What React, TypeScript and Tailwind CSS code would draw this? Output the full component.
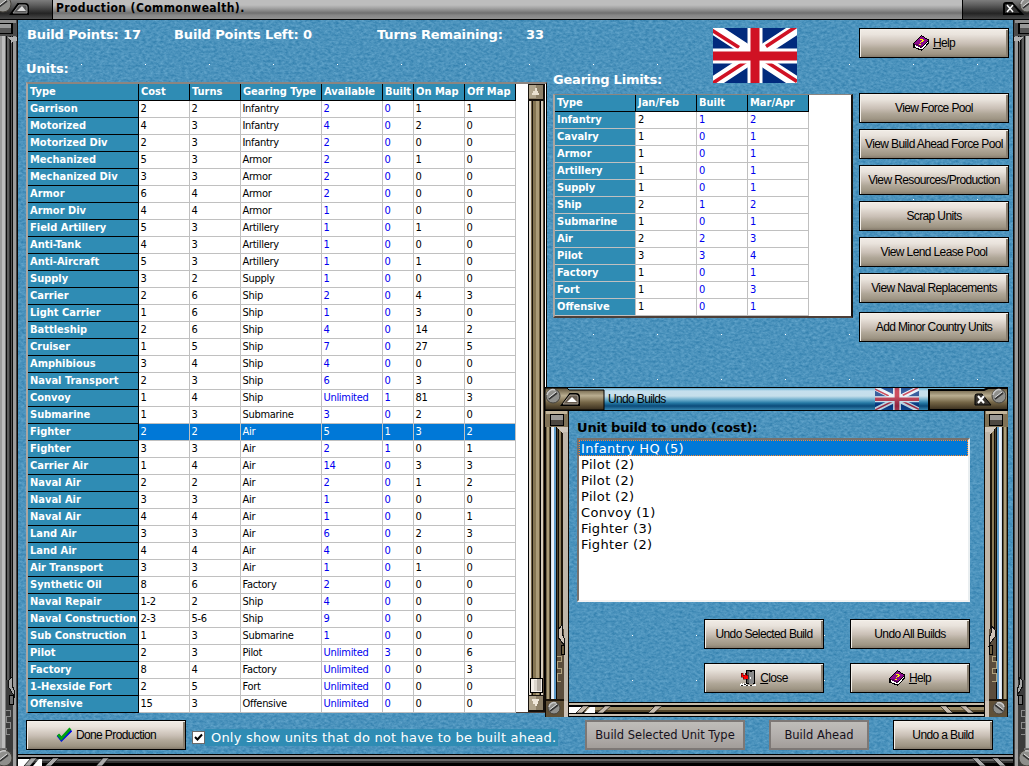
import type { ReactNode } from "react";
import clsx from "clsx";

type Cell = string | number;

const UNIT_HEADERS = ["Type", "Cost", "Turns", "Gearing Type", "Available", "Built", "On Map", "Off Map"];

const UNITS: Cell[][] = [
  ["Garrison", 2, 2, "Infantry", 2, 0, 1, 1],
  ["Motorized", 4, 3, "Infantry", 4, 0, 2, 0],
  ["Motorized Div", 2, 3, "Infantry", 2, 0, 0, 0],
  ["Mechanized", 5, 3, "Armor", 2, 0, 1, 0],
  ["Mechanized Div", 3, 3, "Armor", 2, 0, 0, 0],
  ["Armor", 6, 4, "Armor", 2, 0, 0, 0],
  ["Armor Div", 4, 4, "Armor", 1, 0, 0, 0],
  ["Field Artillery", 5, 3, "Artillery", 1, 0, 1, 0],
  ["Anti-Tank", 4, 3, "Artillery", 1, 0, 0, 0],
  ["Anti-Aircraft", 5, 3, "Artillery", 1, 0, 1, 0],
  ["Supply", 3, 2, "Supply", 1, 0, 0, 0],
  ["Carrier", 2, 6, "Ship", 2, 0, 4, 3],
  ["Light Carrier", 1, 6, "Ship", 1, 0, 3, 0],
  ["Battleship", 2, 6, "Ship", 4, 0, 14, 2],
  ["Cruiser", 1, 5, "Ship", 7, 0, 27, 5],
  ["Amphibious", 3, 4, "Ship", 4, 0, 0, 0],
  ["Naval Transport", 2, 3, "Ship", 6, 0, 3, 0],
  ["Convoy", 1, 4, "Ship", "Unlimited", 1, 81, 3],
  ["Submarine", 1, 3, "Submarine", 3, 0, 2, 0],
  ["Fighter", 2, 2, "Air", 5, 1, 3, 2],
  ["Fighter", 3, 3, "Air", 2, 1, 0, 1],
  ["Carrier Air", 1, 4, "Air", 14, 0, 3, 3],
  ["Naval Air", 2, 2, "Air", 2, 0, 1, 2],
  ["Naval Air", 3, 3, "Air", 1, 0, 0, 0],
  ["Naval Air", 4, 4, "Air", 1, 0, 0, 1],
  ["Land Air", 3, 3, "Air", 6, 0, 2, 3],
  ["Land Air", 4, 4, "Air", 4, 0, 0, 0],
  ["Air Transport", 3, 3, "Air", 1, 0, 1, 0],
  ["Synthetic Oil", 8, 6, "Factory", 2, 0, 0, 0],
  ["Naval Repair", "1-2", 2, "Ship", 4, 0, 0, 0],
  ["Naval Construction", "2-3", "5-6", "Ship", 9, 0, 0, 0],
  ["Sub Construction", 1, 3, "Submarine", 1, 0, 0, 0],
  ["Pilot", 2, 3, "Pilot", "Unlimited", 3, 0, 6],
  ["Factory", 8, 4, "Factory", "Unlimited", 0, 0, 3],
  ["1-Hexside Fort", 2, 5, "Fort", "Unlimited", 0, 0, 0],
  ["Offensive", 15, 3, "Offensive", "Unlimited", 0, 0, 0],
];

const GEARING_HEADERS = ["Type", "Jan/Feb", "Built", "Mar/Apr"];

const GEARING: Cell[][] = [
  ["Infantry", 2, 1, 2],
  ["Cavalry", 1, 0, 1],
  ["Armor", 1, 0, 1],
  ["Artillery", 1, 0, 1],
  ["Supply", 1, 0, 1],
  ["Ship", 2, 1, 2],
  ["Submarine", 1, 0, 1],
  ["Air", 2, 2, 3],
  ["Pilot", 3, 3, 4],
  ["Factory", 1, 0, 1],
  ["Fort", 1, 0, 3],
  ["Offensive", 1, 0, 1],
];

const UNDO_ITEMS = ["Infantry HQ (5)", "Pilot (2)", "Pilot (2)", "Pilot (2)", "Convoy (1)", "Fighter (3)", "Fighter (2)"];

const SELECTED_UNIT = 19;

/* Speckled blue backdrop with a faint grid of white dots */
function Texture({ id, dotX, dotY }: { id: string; dotX: number; dotY: number }) {
  return (
    <svg className="absolute inset-0 -z-10 h-full w-full" aria-hidden="true">
      <defs>
        <filter id={`${id}-noise`} x="0" y="0" width="100%" height="100%" colorInterpolationFilters="sRGB">
          <feTurbulence type="fractalNoise" baseFrequency="0.28 0.42" numOctaves="3" seed="7" stitchTiles="stitch" />
          <feColorMatrix values="0.26 0 0 0 0.165  0.2 0 0 0 0.475  0.16 0 0 0 0.66  0 0 0 0 1" />
        </filter>
        <pattern id={`${id}-dots`} x={dotX} y={dotY} width="64" height="45" patternUnits="userSpaceOnUse">
          <rect width="1" height="1" fill="#fff" />
        </pattern>
      </defs>
      <rect width="100%" height="100%" filter={`url(#${id}-noise)`} />
      <rect width="100%" height="100%" fill={`url(#${id}-dots)`} />
    </svg>
  );
}

function UnionJack({ className }: { className?: string }) {
  return (
    <svg viewBox="0 0 84 55" preserveAspectRatio="none" className={className}>
      <rect width="84" height="55" fill="#012a7d" />
      <path d="M0 0L84 55M84 0L0 55" stroke="#fff" strokeWidth="12" />
      <path d="M-2 1.5L26 19.5M84 -2L53 18.5M0 55L33 33.5M84 53.5L53 33.5" stroke="#d01224" strokeWidth="3.6" />
      <path d="M42 0V55M0 28H84" stroke="#fff" strokeWidth="15" />
      <path d="M0 28H84M42 0V55" stroke="#d01224" strokeWidth="9" />
    </svg>
  );
}

function BookIcon() {
  return (
    <svg viewBox="0 0 16 16" className="h-4 w-4" shapeRendering="crispEdges">
      <path d="M0 9L8 0L16 4.5V8L9 16L0 12.5Z" fill="#000" />
      <path d="M1.5 10L8.6 13L14.8 6.5V8L8.8 14.6L1.5 11.8Z" fill="#fff" />
      <path d="M1.5 8.5L8.3 1.2L15 5L8.6 11.8Z" fill="#8c0b8c" />
      <path d="M1.5 8.5L3 8.5L9 11.5V13L1.5 10Z" fill="#5a005a" />
      <path d="M7 4H10V5H11V6H10V7H8V8H7V7H8V6H9V5H7ZM6 9H8V10H6Z" fill="#ff0" />
    </svg>
  );
}

function CheckIcon() {
  return (
    <svg viewBox="0 0 16 16" className="h-4 w-4">
      <path d="M2 8L5.5 12.5L15 3" stroke="#0000f0" strokeWidth="3.4" fill="none" />
      <path d="M2 7.5L5.3 11.5L14.4 1.5" stroke="#00a010" strokeWidth="2.8" fill="none" />
    </svg>
  );
}

function DoorIcon() {
  return (
    <svg viewBox="0 0 16 16" className="h-4 w-4" shapeRendering="crispEdges">
      <path d="M6 0H15V14H6Z" fill="#000" />
      <path d="M7 1H10V13H7Z" fill="#555" />
      <path d="M9 2L14 1V13L9 15Z" fill="#8a8a8a" />
      <path d="M10 7H11V9H10Z" fill="#fff" />
      <path d="M0 14H1V13H2V14H3V13H4V14H5V13H6V14H7V15H14V14H16V16H0Z" fill="#fff" />
      <path d="M1 15H3V16H1ZM4 14H6V15H4ZM6 15H8V16H6ZM10 15H12V16H10Z" fill="#222" />
      <path d="M1 3H3V5H5V3H6V5H8V9H3V7H1Z" fill="#f00" stroke="#000" strokeWidth=".4" />
    </svg>
  );
}

function SkinButton({
  children,
  icon,
  className,
}: {
  children: ReactNode;
  icon?: ReactNode;
  className?: string;
}) {
  return (
    <button
      type="button"
      className={clsx(
        "flex h-[30px] shrink-0 items-center justify-center gap-1 whitespace-nowrap border border-black bg-[linear-gradient(180deg,#f1ece6_0%,#e9e3dc_20%,#d5ccc3_40%,#c9bfb5_52%,#b0a798_70%,#9d9483_90%,#857b6c_100%)] font-['Liberation_Sans'] text-[12px] leading-none tracking-[-0.62px] text-black shadow-[inset_1px_1px_0_#f4f0ea,inset_-2px_-1px_0_#897f70]",
        className
      )}
    >
      {icon}
      <span>{children}</span>
    </button>
  );
}

function DisabledButton({ children, className }: { children: ReactNode; className?: string }) {
  return (
    <button
      type="button"
      disabled
      className={clsx(
        "h-[30px] shrink-0 whitespace-nowrap border-2 border-[#7d7876] bg-[linear-gradient(180deg,#bfbdb9,#b3afad_50%,#a29d99)] pt-[2px] font-['DejaVu_Sans'] text-[11.5px] leading-none text-[#15101a]",
        className
      )}
    >
      {children}
    </button>
  );
}

function HeaderRow({ labels, columns }: { labels: string[]; columns: string }) {
  return (
    <div className={clsx("grid h-[17px] w-fit", columns)}>
      {labels.map((label) => (
        <div
          key={label}
          className="overflow-hidden whitespace-nowrap border-r border-b border-black bg-[#2f8cb4] pl-[2px] text-[11px] leading-[15px] font-bold text-white"
        >
          {label}
        </div>
      ))}
    </div>
  );
}

function UnitGrid() {
  const columns = "grid-cols-[111px_51px_51px_81px_61px_31px_51px_51px]";
  return (
    <div className="flex h-[631px] justify-between border-t-2 border-r border-b border-l-2 border-t-[#8c8580] border-r-black border-b-[#4d3f38] border-l-[#aaa6a2] bg-white pr-px font-['DejaVu_Sans_Condensed','DejaVu_Sans']">
      <div>
        <HeaderRow labels={UNIT_HEADERS} columns={columns} />
        {UNITS.map((row, r) => {
          const selected = r === SELECTED_UNIT;
          return (
            <div key={r} className={clsx("grid h-[17px]", columns)}>
              {row.map((value, c) =>
                c === 0 ? (
                  <div
                    key={c}
                    className="overflow-hidden whitespace-nowrap border-r border-b border-black bg-[#2f8cb4] pl-[2px] text-[11px] leading-[16px] font-bold text-white"
                  >
                    {value}
                  </div>
                ) : (
                  <div
                    key={c}
                    className={clsx(
                      "whitespace-nowrap border-r border-b border-[#c0c0c0] pl-[1.5px] text-[11px] leading-[16px] tracking-[-0.3px]",
                      selected ? "bg-[#0078d7] text-white" : c === 4 || c === 5 ? "text-[#0000f0]" : "text-black"
                    )}
                  >
                    {value}
                  </div>
                )
              )}
            </div>
          );
        })}
      </div>
      <ScrollBar />
    </div>
  );
}

function ScrollBar() {
  return (
    <div className="flex w-[17px] flex-col bg-[linear-gradient(90deg,#000_0_1px,#e5ded4_1px_3px,#746549_3px_4px,#181109_4px_5px,#857552_5px_8px,#ab9b78_8px_11px,#675637_11px_12px,#000_12px_13px,#d6cdbd_13px_15px,#514331_15px_16px,#000_16px)]">
      <svg width="17" height="17" viewBox="0 0 17 17">
        <rect width="17" height="17" fill="#15100b" />
        <path d="M1 1H15V15H1Z" fill="#8d8068" />
        <path d="M1 1H8V14H1Z" fill="#b0a48c" />
        <path d="M7 4H9V7H10V9H11V11H4V9H5V7H7Z" fill="#e9e0d0" />
      </svg>
      <div className="flex-1" />
      <svg width="17" height="36" viewBox="0 0 17 36">
        <rect x="2" y="2" width="13" height="15" fill="#000" />
        <rect x="3" y="3" width="11" height="13" fill="#f4efe8" />
        <rect x="9" y="3" width="4" height="12" fill="#b4ada3" />
        <rect x="6" y="4" width="3" height="11" fill="#dcd6cd" />
        <rect y="19" width="17" height="17" fill="#15100b" />
        <rect x="1" y="20" width="14" height="14" fill="#8d8068" />
        <rect x="1" y="20" width="7" height="14" fill="#b0a48c" />
        <path d="M4 23H11V25H10V28H9V30H7V28H5V25H4Z" fill="#f0e8da" />
      </svg>
    </div>
  );
}

function GearingGrid() {
  const columns = "grid-cols-[81px_61px_51px_61px]";
  return (
    <div className="h-[224px] w-[300px] overflow-hidden border-t border-r-2 border-b-2 border-l-2 border-t-[#8c8580] border-r-[#15100c] border-b-[#4d3f38] border-l-[#aaa6a2] bg-white font-['DejaVu_Sans_Condensed','DejaVu_Sans']">
      <HeaderRow labels={GEARING_HEADERS} columns={columns} />
      {GEARING.map((row, r) => (
        <div key={r} className={clsx("grid h-[17px] w-fit", columns)}>
          {row.map((value, c) => (
            <div
              key={c}
              className={clsx(
                "whitespace-nowrap border-r border-b border-[#c0c0c0] pl-[2px] text-[11px] leading-[16px]",
                c === 0 && "bg-[#2f8cb4] font-bold text-white",
                c === 1 && "text-black",
                c > 1 && "text-[#0000f0]"
              )}
            >
              {value}
            </div>
          ))}
        </div>
      ))}
    </div>
  );
}

function Screw({ x, y, r = 6 }: { x: number; y: number; r?: number }) {
  return (
    <g shapeRendering="auto">
      <circle cx={x} cy={y} r={r} fill="#8f8f8c" stroke="#45423c" strokeWidth="1" />
      <path d={`M${x - r + 1} ${y - 1}A${r - 1} ${r - 1} 0 0 1 ${x + 2} ${y - r + 1}`} stroke="#c9c9c9" strokeWidth="1.5" fill="none" />
      <path d={`M${x - 4} ${y + 3}L${x + 4} ${y - 3}`} stroke="#333" strokeWidth="1.6" />
      <path d={`M${x - 4} ${y + 1.5}L${x + 3} ${y - 4}`} stroke="#ddd" strokeWidth="1" />
    </g>
  );
}

/* Grey side rail of the main window; the right one is the same drawing mirrored */
function OuterRail({ mirrored }: { mirrored?: boolean }) {
  return (
    <svg width="18" height="746" viewBox="0 0 18 746" className={clsx("shrink-0", mirrored && "-scale-x-100")} shapeRendering="crispEdges">
      <rect width="18" height="746" fill="#0a0a0a" />
      <rect width="2" height="746" fill="#9b9b9b" />
      <rect x="2" width="3" height="746" fill="#bcbcbc" />
      <rect x="5" width="1" height="746" fill="#777" />
      <rect x="7" width="2" height="746" fill="#5d5d5d" />
      <rect x="9" width="1" height="746" fill="#333" />
      <rect x="11" width="1" height="746" fill="#5a5a5a" />
      <rect x="13" width="3" height="746" fill="#9c9c9c" />
      <rect x="16" width="1" height="746" fill="#444" />
      <rect width="17" height="16" fill="#4b4b4b" />
      <rect width="16" height="3" fill="#8f8f8f" />
      <rect y="3" width="13" height="11" fill="#000" />
      <rect y="4" width="11" height="4" fill="#999" />
      <rect y="8" width="11" height="5" fill="#555" />
      <path d="M7 17H17V21H13L11 23V20Z" fill="#b2b2b2" />
      <g>
        <path d="M6 660H13V746H6Z" fill="#3b3b3b" />
        <path d="M9 660L12 657V665L14 670V676L8 666Z" fill="#a8a8a8" stroke="#111" />
        <path d="M9 675H13V684H9Z" fill="#707070" stroke="#000" />
        <path d="M6 690H10V696H6V702H10V708H6V714H10" stroke="#8b8b8b" fill="none" />
        <path d="M0 728H7V746H0Z" fill="#747474" />
      </g>
      <Screw x={4} y={738} r={8} />
      <rect x="13" y="729" width="3" height="17" fill="#a1a1a1" />
    </svg>
  );
}

/* Bronze side rail of the dialog */
function InnerRail({ mirrored }: { mirrored?: boolean }) {
  return (
    <svg width="24" height="306" viewBox="0 0 24 306" className={clsx("shrink-0", mirrored && "-scale-x-100")} shapeRendering="crispEdges">
      <rect width="24" height="306" fill="#0e0a05" />
      <rect x="1" width="1" height="306" fill="#6e6247" />
      <rect x="2" width="2" height="306" fill="#aa9c78" />
      <rect x="4" width="1" height="306" fill="#5d5138" />
      <rect x="6" width="1" height="288" fill="#d4e0ee" />
      <rect x="7" width="2" height="288" fill="#edf1f8" />
      <rect x="9" width="2" height="288" fill="#5e9bc9" />
      <rect x="12" width="1" height="306" fill="#4c422e" />
      <rect x="14" width="2" height="306" fill="#8b7b58" />
      <rect x="16" width="2" height="306" fill="#1c1409" />
      <rect x="18" width="5" height="306" fill="#bfb6a9" />
      <rect width="23" height="16" fill="#807256" />
      <rect x="1" width="21" height="3" fill="#c2b59b" />
      <rect x="5" y="3" width="14" height="12" fill="#000" />
      <rect x="6" y="4" width="12" height="5" fill="#9c9a96" />
      <rect x="6" y="9" width="12" height="5" fill="#4c4741" />
      <path d="M12 16H23V21H18V23L14 19Z" fill="#d0c7bb" />
      <path d="M12 218H19V290H12Z" fill="#5b4d3c" />
      <path d="M13 219L17 214V222L19 227V234L13 226Z" fill="#d0c4b8" stroke="#111" />
      <path d="M16 234H19V243H16Z" fill="#6c5d40" stroke="#000" />
      <path d="M12 245H16V250H12V257H16V262H12V270H16" stroke="#afa17d" fill="none" />
      <rect x="1" y="290" width="18" height="16" fill="#605037" />
      <rect x="1" y="288" width="18" height="2" fill="#1c140a" />
      <Screw x={9} y={297} />
      <rect x="19" y="290" width="4" height="16" fill="#cec3b7" />
    </svg>
  );
}

function UndoDialog() {
  return (
    <section className="absolute top-[387px] left-[545px] z-10 w-[463px]">
      <div className="flex h-6 items-stretch border-y border-black bg-[linear-gradient(180deg,#61abd0_0,#c5dfed_3px,#c6dfeb_8px,#67aaca_12px,#2478a4_15px,#0b4b7a_18px,#3585af_100%)]">
        <svg width="60" height="22" viewBox="0 0 60 22">
          <defs>
            <linearGradient id="bronze" x2="0" y2="1">
              <stop offset="0" stopColor="#5f5239" />
              <stop offset=".35" stopColor="#b9ad90" />
              <stop offset=".65" stopColor="#756647" />
              <stop offset="1" stopColor="#372c1c" />
            </linearGradient>
          </defs>
          <path d="M0 0H22L24 2H59V22H0Z" fill="url(#bronze)" stroke="#000" />
          <path d="M17 17L25 6H31Q34 6 34 9V17Z" fill="#332a20" stroke="#000" strokeWidth="2" />
          <path d="M18 16L25 7H31Q33 7 33 9V16Z" fill="#665c50" stroke="#aaa093" />
          <path d="M22 14L27 9L32 14Z" fill="#fff" />
          <Screw x={8} y={8} r={7} />
        </svg>
        <span className="ml-[3px] flex-1 font-['Liberation_Sans'] text-[12px] leading-[22px] tracking-[-0.65px]">Undo Builds</span>
        <UnionJack className="mr-[9px] h-[22px] w-[44px] opacity-70" />
        <svg width="80" height="22" viewBox="0 0 80 22">
          <path d="M1 2H56L60 0H80V22H1Z" fill="url(#bronze)" stroke="#000" strokeWidth="2" />
          <path d="M47 17V8Q47 6 49 6H54L63 17Z" fill="#37332e" stroke="#000" />
          <path d="M50 8L56 15M56 8L50 15" stroke="#fff" strokeWidth="2" />
          <Screw x={71} y={8} r={7} />
        </svg>
      </div>
      <div className="flex h-[306px]">
        <InnerRail />
        <div className="flex flex-1 flex-col">
          <div className="relative isolate h-[291px] overflow-hidden pt-[9px] pr-[14px] pl-2">
            <Texture id="undo" dotX={63} dotY={44} />
            <h2 className="h-[18px] font-['DejaVu_Sans'] text-[13px] leading-[16px] font-bold tracking-[-0.18px] text-black">
              Unit build to undo (cost):
            </h2>
            <ul className="h-[164px] w-[393px] border-t-2 border-r-2 border-b-2 border-l-2 border-t-[#77716d] border-r-[#e9eef0] border-b-[#f3f3f3] border-l-[#77716d] bg-white font-['DejaVu_Sans'] text-[13px] leading-[18px] tracking-[0.35px]">
              {UNDO_ITEMS.map((item, i) => (
                <li
                  key={i}
                  className={clsx(
                    "h-4 pl-[2px]",
                    i === 0 ? "bg-[#0078d7] text-white outline-1 -outline-offset-1 outline-dotted outline-[#ff8728]" : "text-black"
                  )}
                >
                  {item}
                </li>
              ))}
            </ul>
            <div className="mt-[17px] ml-[127px] grid grid-cols-[120px_120px] gap-x-[26px] gap-y-[14px]">
              <SkinButton>Undo Selected Build</SkinButton>
              <SkinButton>Undo All Builds</SkinButton>
              <SkinButton icon={<DoorIcon />}>
                <u>C</u>lose
              </SkinButton>
              <SkinButton icon={<BookIcon />}>
                <u>H</u>elp
              </SkinButton>
            </div>
          </div>
          <svg width="415" height="15" viewBox="0 0 415 15">
            <rect width="415" height="15" fill="#000" />
            <rect y="1" width="415" height="2" fill="#c5bba9" />
            <rect y="5" width="415" height="3" fill="#9c8c67" />
            <rect y="8" width="415" height="2" fill="#544529" />
            <rect y="12" width="415" height="2" fill="#c9bfb1" />
            <path d="M0 5H13L7 11H0ZM21 5H26V11H15Z" fill="#fff" />
            <path d="M14 4H20L13 11H7ZM36 4H42L34 11H28ZM86 4H93L85 11H79ZM371 4H377L384 11H378ZM391 4H397L405 11H399Z" fill="#c8bcae" stroke="#000" strokeWidth=".6" />
          </svg>
        </div>
        <InnerRail mirrored />
      </div>
    </section>
  );
}

function TitleBar() {
  return (
    <header className="flex h-5 shrink-0 border-b border-black bg-[linear-gradient(180deg,#bdbdbd_0_5px,#a4a4a4_8px,#707070_13px,#858585_15px,#929292_19px)]">
      <svg width="53" height="19" viewBox="0 0 53 19">
        <defs>
          <linearGradient id="steel" x2="0" y2="1">
            <stop offset="0" stopColor="#7d7d7d" />
            <stop offset=".25" stopColor="#606060" />
            <stop offset=".7" stopColor="#242424" />
            <stop offset="1" stopColor="#494949" />
          </linearGradient>
        </defs>
        <rect width="52" height="19" fill="url(#steel)" />
        <path d="M52.5 0V19" stroke="#000" />
        <path d="M11 14L18 4H25Q28 4 28 7V14Z" fill="#2b2b2b" stroke="#000" strokeWidth="2" />
        <path d="M13 13L19 5H25Q27 5 27 7V13Z" fill="#585858" stroke="#929292" />
        <path d="M17 11L22 6L26 11Z" fill="#ddd" />
        <Screw x={3} y={4} r={8} />
      </svg>
      <h1 className="ml-[3px] flex-1 font-['DejaVu_Sans_Condensed','DejaVu_Sans'] text-[12px] leading-[17px] font-bold tracking-[0.4px] text-black">
        Production (Commonwealth).
      </h1>
      <svg width="67" height="19" viewBox="0 0 67 19">
        <rect width="67" height="19" fill="url(#steel)" />
        <path d="M.5 0V19" stroke="#000" />
        <path d="M42 14V5Q42 3 44 3H50L60 14Z" fill="#333" stroke="#000" strokeWidth="2" />
        <path d="M45 5L51 12M51 5L45 12" stroke="#fff" strokeWidth="1.5" />
        <Screw x={65} y={5} r={7} />
      </svg>
    </header>
  );
}

export default function App() {
  return (
    <div className="relative isolate flex h-[766px] w-[1029px] flex-col overflow-hidden bg-black">
      <TitleBar />
      <div className="flex h-[746px]">
        <OuterRail />
        <div className="flex w-[995px] shrink-0 flex-col">
          <main className="relative isolate h-[734px] overflow-hidden">
            <Texture id="main" dotX={63} dotY={44} />
            <div className="flex h-[693px] pl-2">
              <div className="w-[521px]">
                <div className="grid h-[62px] grid-cols-[147px_203px_149px_1fr] pt-[6px] pl-px font-['DejaVu_Sans'] text-[13px] leading-[17px] font-bold tracking-[-0.12px] text-white">
                  <span>Build Points: 17</span>
                  <span>Build Points Left: 0</span>
                  <span>Turns Remaining:</span>
                  <span>33</span>
                  <span className="-ml-px self-end pb-[5px]">Units:</span>
                </div>
                <UnitGrid />
              </div>
              <div className="ml-[6px] w-[300px] pt-2">
                <UnionJack className="ml-[160px] h-[55px] w-[84px]" />
                <h2 className="-mt-[12px] mb-[6px] font-['DejaVu_Sans'] text-[13px] leading-[17px] font-bold tracking-[-0.2px] text-white">
                  Gearing Limits:
                </h2>
                <GearingGrid />
              </div>
              <div className="ml-[6px] flex w-[150px] flex-col gap-[6px] pt-2">
                <SkinButton className="mb-[29px]" icon={<BookIcon />}>
                  <u>H</u>elp
                </SkinButton>
                <SkinButton>View Force Pool</SkinButton>
                <SkinButton>View Build Ahead Force Pool</SkinButton>
                <SkinButton>View Resources/Production</SkinButton>
                <SkinButton>Scrap Units</SkinButton>
                <SkinButton>View Lend Lease Pool</SkinButton>
                <SkinButton>View Naval Replacements</SkinButton>
                <SkinButton className="mt-[3px]">Add Minor Country Units</SkinButton>
              </div>
            </div>
            <footer className="flex pt-[7px] pl-2">
              <SkinButton className="w-[160px]" icon={<CheckIcon />}>
                Done Production
              </SkinButton>
              <label className="mt-[9px] ml-[6px] flex h-[17px] w-[366px] items-center">
                <span className="flex h-[13px] w-[13px] items-center justify-center border border-[#6b6b6b] bg-white">
                  <svg viewBox="0 0 9 9" className="h-[9px] w-[9px]">
                    <path d="M1 4L3.5 6.5L8 1.5" stroke="#000" strokeWidth="2" fill="none" />
                  </svg>
                </span>
                <span className="h-[17px] flex-1 whitespace-nowrap bg-[#2f8cb4] pl-[6px] font-['DejaVu_Sans'] text-[13px] leading-[18px] tracking-[0.2px] text-white">
                  Only show units that do not have to be built ahead.
                </span>
              </label>
              <DisabledButton className="ml-[27px] w-[160px]">Build Selected Unit Type</DisabledButton>
              <DisabledButton className="ml-6 w-[100px]">Build Ahead</DisabledButton>
              <SkinButton className="ml-6 w-[100px]">Undo a Build</SkinButton>
            </footer>
          </main>
          <svg width="995" height="12" viewBox="0 0 995 12">
            <rect width="995" height="12" fill="#000" />
            <rect y="1" width="995" height="2" fill="#999" />
            <rect y="5" width="995" height="2" fill="#666" />
            <rect y="7" width="995" height="2" fill="#333" />
            <path d="M0 5H12L6 12H0ZM21 5H24V12H15Z" fill="#fff" />
            <path d="M13 4H19L12 12H6ZM35 4H41L33 12H27ZM85 4H91L84 12H78ZM954 4H960L968 12H962ZM974 4H980L988 12H982Z" fill="#aaa" stroke="#000" strokeWidth=".6" />
          </svg>
        </div>
        <OuterRail mirrored />
      </div>
      <UndoDialog />
    </div>
  );
}
